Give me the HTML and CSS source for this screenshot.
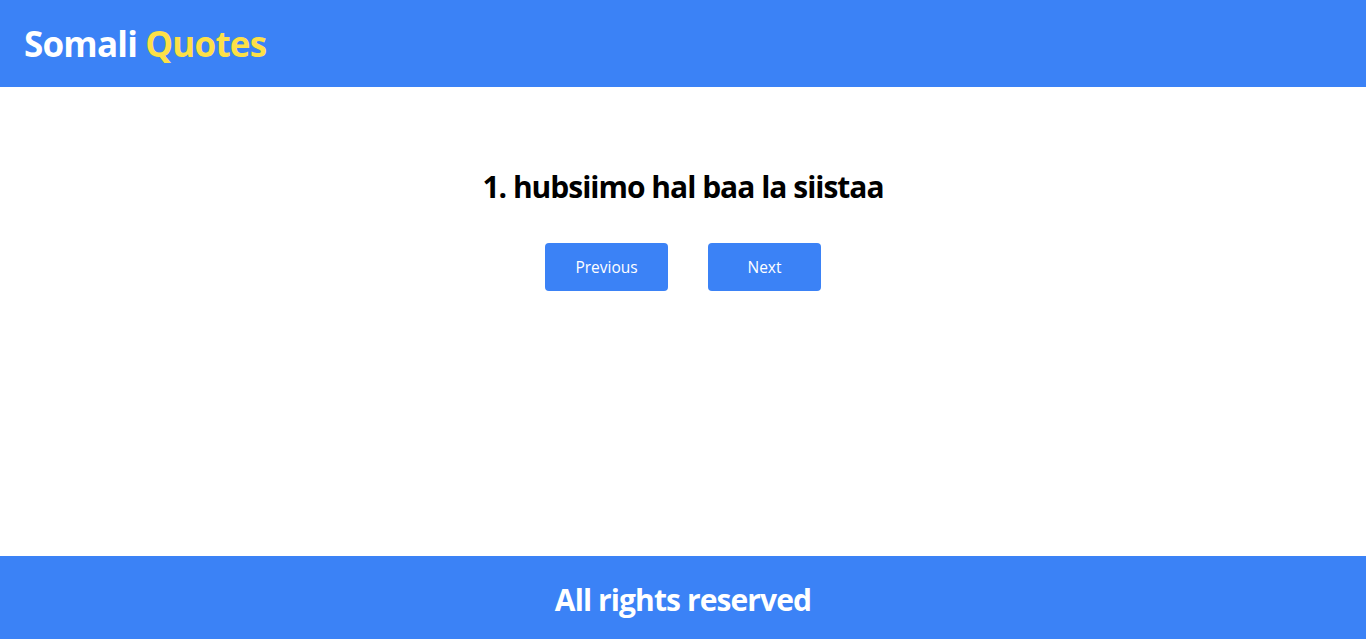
FILE: index.html
```html
<!DOCTYPE html>
<html lang="so">
<head>
<meta charset="utf-8">
<title>Somali Quotes</title>
<link rel="stylesheet" href="styles.css">
</head>
<body>
<div class="page">
  <header class="header">
    <h1 class="brand">Somali <span class="brand-accent">Quotes</span></h1>
  </header>
  <main class="main">
    <h2 class="quote">1. hubsiimo hal baa la siistaa</h2>
    <div class="actions">
      <button class="btn btn-prev">Previous</button>
      <button class="btn btn-next">Next</button>
    </div>
  </main>
  <footer class="footer">
    <p class="footer-text">All rights reserved</p>
  </footer>
</div>
</body>
</html>
```

FILE: styles.css
```css
* { box-sizing: border-box; }
html, body { margin: 0; padding: 0; }
body {
  font-family: "Segoe UI", "Open Sans", "Noto Sans", sans-serif;
  color: #000;
  background: #fff;
}
.page {
  min-height: 100vh;
  display: flex;
  flex-direction: column;
}
.header {
  background: #3b82f6;
  height: 87px;
  display: flex;
  align-items: center;
  padding: 0 24px;
}
.brand {
  margin: 0;
  font-size: 35px;
  font-weight: 700;
  line-height: 40px;
  letter-spacing: -0.8px;
  color: #fff;
}
.brand-accent { color: #fde047; }
.main {
  flex: 1;
  display: flex;
  flex-direction: column;
  align-items: center;
  padding-top: 80px;
}
.quote {
  margin: 0;
  font-size: 30px;
  font-weight: 700;
  line-height: 40px;
  letter-spacing: -1px;
}
.actions {
  display: flex;
  gap: 40px;
  margin-top: 36px;
}
.btn {
  font-family: inherit;
  font-size: 15.5px;
  line-height: 24px;
  color: #fff;
  background: #3b82f6;
  border: none;
  border-radius: 4px;
  height: 48px;
  padding: 0;
  cursor: pointer;
}
.btn-prev { width: 123px; }
.btn-next { width: 113px; }
.footer {
  background: #3b82f6;
  height: 83px;
  display: flex;
  align-items: center;
  justify-content: center;
  padding-top: 4px;
}
.footer-text {
  margin: 0;
  font-size: 30px;
  font-weight: 700;
  line-height: 36px;
  letter-spacing: -0.9px;
  color: #fff;
}
```
